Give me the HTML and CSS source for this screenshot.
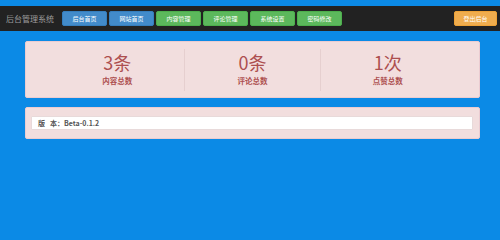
FILE: index.html
```html
<!DOCTYPE html>
<html lang="zh-CN">
<head>
<meta charset="utf-8">
<title>后台管理系统</title>
<link rel="stylesheet" href="styles.css">
</head>
<body>
<nav class="navbar">
  <div class="brand">后台管理系统</div>
  <div class="nav-buttons">
    <a class="btn btn-primary">后台首页</a>
    <a class="btn btn-primary">网站首页</a>
    <a class="btn btn-success">内容管理</a>
    <a class="btn btn-success">评论管理</a>
    <a class="btn btn-success">系统设置</a>
    <a class="btn btn-success">密码修改</a>
  </div>
  <a class="btn btn-warning btn-logout">登出后台</a>
</nav>
<main class="container">
  <section class="panel stats">
    <div class="stat">
      <div class="stat-num">3条</div>
      <div class="stat-label">内容总数</div>
    </div>
    <div class="stat">
      <div class="stat-num">0条</div>
      <div class="stat-label">评论总数</div>
    </div>
    <div class="stat">
      <div class="stat-num">1次</div>
      <div class="stat-label">点赞总数</div>
    </div>
  </section>
  <section class="panel info">
    <div class="info-bar"><span class="gap">版</span>本：Beta-0.1.2</div>
  </section>
</main>
</body>
</html>
```
FILE: styles.css
```css
* { box-sizing: border-box; }
html, body { margin: 0; padding: 0; }
body {
  background: #0b8ae6;
  font-family: "Noto Sans CJK SC", "Liberation Sans", sans-serif;
  padding-top: 6px;
  height: 202px;
  overflow: hidden;
}
.navbar {
  height: 25px;
  background: #222222;
  display: flex;
  align-items: center;
  padding: 0 3px 0 6px;
}
.brand {
  color: #9d9d9d;
  font-size: 8px;
  line-height: 10px;
  width: 56px;
  white-space: nowrap;
}
.nav-buttons {
  display: flex;
  gap: 2px;
  flex: 1;
}
.btn {
  display: flex;
  align-items: center;
  justify-content: center;
  width: 45px;
  height: 15px;
  font-size: 6px;
  color: #fff;
  border-radius: 2px;
  border: 1px solid transparent;
  white-space: nowrap;
}
.btn-primary { background: #428bca; border-color: #357ebd; }
.btn-success { background: #5cb85c; border-color: #4cae4c; }
.btn-warning { background: #f0ad4e; border-color: #eea236; }
.btn-logout { width: 43px; }
.container {
  margin: 10px 20px 0 25px;
  display: flex;
  flex-direction: column;
  gap: 9px;
}
.panel {
  background: #f2dede;
  border: 1px solid #ebccd1;
  border-radius: 2px;
}
.stats {
  height: 57px;
  display: flex;
  align-items: center;
  padding: 0 24px;
}
.stat {
  flex: 1;
  height: 42px;
  display: flex;
  flex-direction: column;
  align-items: center;
  justify-content: center;
  color: #ad4f4f;
  border-right: 1px solid #e6cfcf;
}
.stat:last-child { border-right: none; }
.stat-num {
  font-size: 18px;
  line-height: 20px;
  margin-top: -2px;
  font-weight: 400;
}
.stat-label {
  font-size: 7.5px;
  line-height: 9px;
  margin-top: 4px;
  font-weight: 700;
}
.info {
  height: 32px;
  display: flex;
  align-items: center;
  padding: 0 6px 0 5px;
}
.info-bar {
  flex: 1;
  height: 14px;
  background: #fff;
  border: 1px solid #e8dada;
  border-radius: 1px;
  font-size: 7px;
  line-height: 12px;
  color: #555;
  padding-left: 6px;
  font-weight: 700;
}
.gap { margin-right: 5px; }
```
